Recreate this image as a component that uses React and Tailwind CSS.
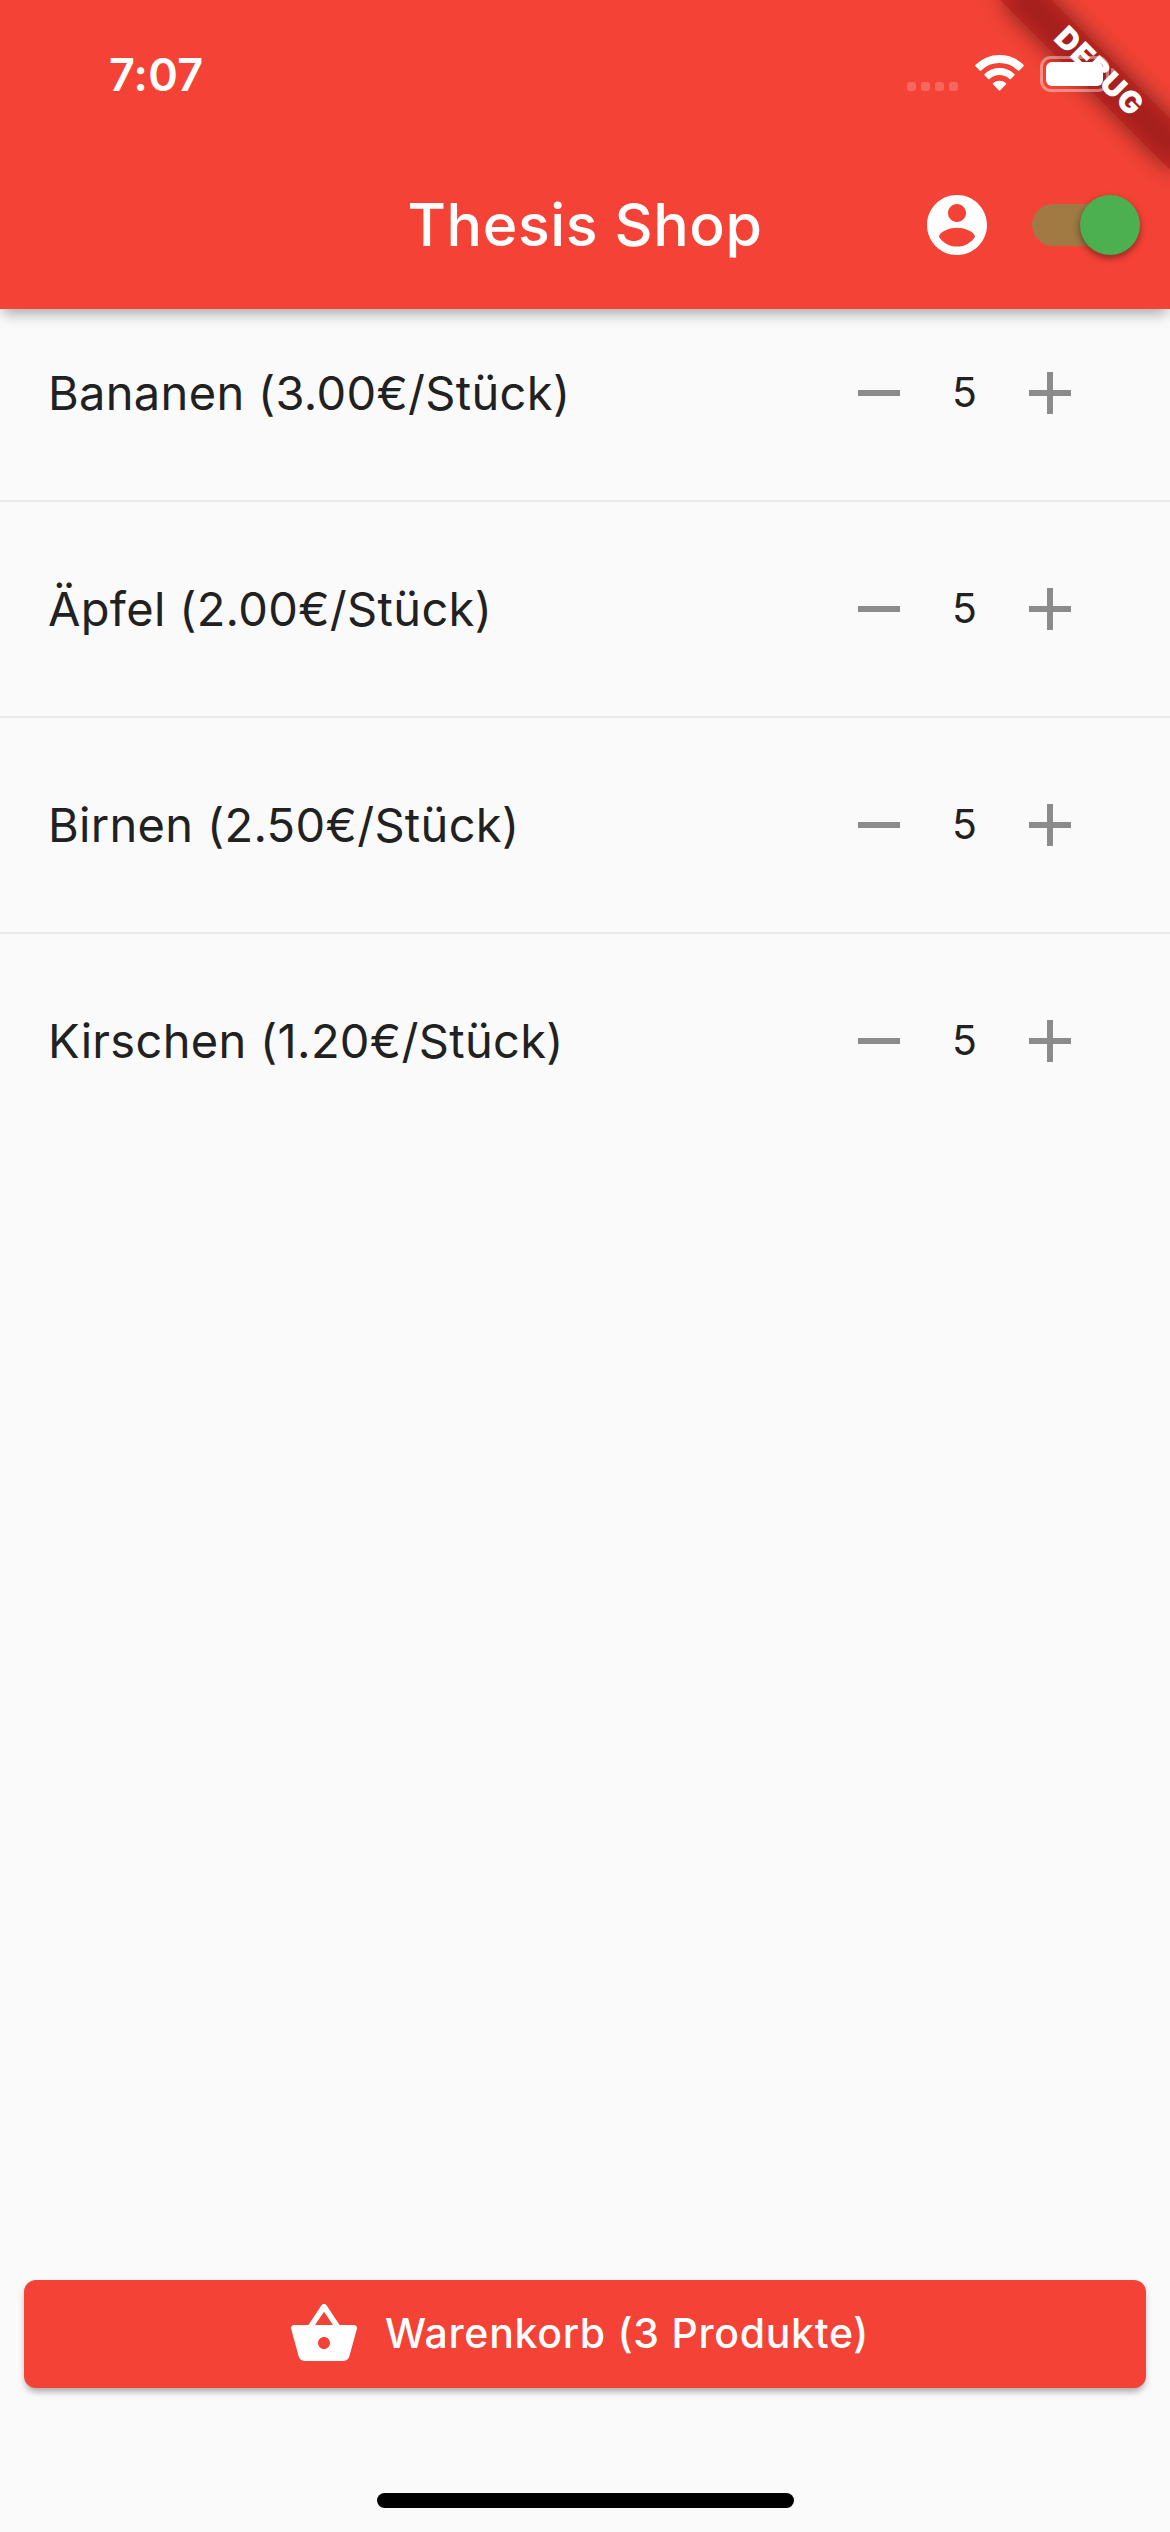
import React from "react";

const products = [
  { name: "Bananen", price: "3.00", count: 5 },
  { name: "Äpfel", price: "2.00", count: 5 },
  { name: "Birnen", price: "2.50", count: 5 },
  { name: "Kirschen", price: "1.20", count: 5 },
];

function WifiIcon() {
  return (
    <svg viewBox="284 165 146 108" className="h-9 w-[49px]" fill="white" stroke="white" strokeWidth="6" strokeLinejoin="round">
      <path d="M287.2 196.4A100 100 0 0 1 426.8 196.4L414.2 209.3A82 82 0 0 0 299.8 209.3Z" />
      <path d="M314.6 224.1A61 61 0 0 1 399.4 224.1L389 234.9A46 46 0 0 0 325 234.9Z" />
      <path d="M340 251.5A26 26 0 0 1 374 251.5L357 269Z" />
    </svg>
  );
}

function Battery() {
  return (
    <div className="flex h-9 items-center gap-[2px]">
      <div className="h-9 w-[69px] rounded-[11px] border-[3px] border-white/40 p-[3px]">
        <div className="h-6 w-[57px] rounded-[6px] bg-white" />
      </div>
      <div className="h-3 w-1 rounded-r-full bg-white/40" />
    </div>
  );
}

function AccountIcon() {
  return (
    <svg viewBox="0 0 24 24" className="size-[72px]" fill="white">
      <path d="M12 2C6.48 2 2 6.48 2 12s4.48 10 10 10 10-4.48 10-10S17.52 2 12 2zm0 3c1.66 0 3 1.34 3 3s-1.34 3-3 3-3-1.34-3-3 1.34-3 3-3zm0 14.2c-2.5 0-4.71-1.28-6-3.22.03-1.99 4-3.08 6-3.08 1.99 0 5.97 1.09 6 3.08-1.29 1.94-3.5 3.22-6 3.22z" />
    </svg>
  );
}

function BasketIcon() {
  return (
    <svg viewBox="0 0 24 24" className="size-[72px] shrink-0" fill="white">
      <path d="M17.21 9l-4.38-6.56c-.19-.28-.51-.42-.83-.42-.32 0-.64.14-.83.43L6.79 9H2c-.55 0-1 .45-1 1 0 .09.01.18.04.27l2.54 9.27c.23.84 1 1.46 1.92 1.46h13c.92 0 1.69-.62 1.93-1.46l2.54-9.27L23 10c0-.55-.45-1-1-1h-4.79zM9 9l3-4.4L15 9H9zm3 8c-1.1 0-2-.9-2-2s.9-2 2-2 2 .9 2 2-.9 2-2 2z" />
    </svg>
  );
}

function ProductRow({ product }) {
  return (
    <li className="flex h-[216px] items-center justify-between border-t-2 border-[#ebebeb] pl-12 pr-[84px] first:h-[215px] first:border-t first:border-transparent">
      <span className="pb-px text-[47px] leading-none tracking-[0.32px]">
        {product.name} ({product.price}€/Stück)
      </span>
      <div className="flex items-center">
        <svg viewBox="0 0 24 24" className="size-[72px]" fill="#8b8b8b">
          <path d="M19 13H5v-2h14v2z" />
        </svg>
        <span className="w-[99px] pb-[2px] text-center text-[41px] leading-none">{product.count}</span>
        <svg viewBox="0 0 24 24" className="size-[72px]" fill="#8b8b8b">
          <path d="M19 13h-6v6h-2v-6H5v-2h6V5h2v6h6v2z" />
        </svg>
      </div>
    </li>
  );
}

export default function App() {
  return (
    <div className="relative flex h-[2532px] w-[1170px] flex-col overflow-hidden bg-[#fafafa] font-['Inter',sans-serif] text-[#212121]">
      <header className="relative z-10 h-[309px] shrink-0 bg-[#f44336] text-white shadow-[0_6px_12px_-3px_rgba(0,0,0,0.2),0_9px_15px_-3px_rgba(0,0,0,0.16)]">
        <div className="relative z-20 flex h-[141px] items-start justify-between pl-[109px] pr-[55px] pt-[55px]">
          <span className="mt-[-3px] text-[45px] font-semibold leading-[45px] tracking-[0.2px]">7:07</span>
          <div className="flex items-start">
            <div className="mr-[17px] mt-[27px] flex gap-[5px]">
              {[0, 1, 2, 3].map((i) => (
                <span key={i} className="size-[9px] rounded-[3px] bg-white/20" />
              ))}
            </div>
            <WifiIcon />
            <div className="ml-4 mt-px">
              <Battery />
            </div>
          </div>
        </div>
        <div className="grid h-[168px] grid-cols-[1fr_auto_1fr] items-center">
          <span />
          <h1 className="pb-px text-[59px] font-medium leading-none tracking-[0.6px]">Thesis Shop</h1>
          <div className="flex items-center justify-end pr-[30px]">
            <AccountIcon />
            <div className="ml-[39px] flex h-[42px] w-[108px] items-center">
              <div className="flex h-[42px] w-[99px] items-center rounded-full bg-[#4caf50]/50">
                <div className="ml-12 size-[60px] shrink-0 rounded-full bg-[#4caf50] shadow-[0_3px_6px_rgba(0,0,0,0.3),0_3px_9px_rgba(0,0,0,0.15)]" />
              </div>
            </div>
          </div>
        </div>
        <div className="absolute right-0 top-0 size-[240px] overflow-hidden">
          <div className="absolute left-[120px] top-[84px] h-9 w-[240px] origin-[120px_-84px] rotate-45">
            <div className="absolute inset-0 bg-black/50 blur-[12px]" />
            <div className="absolute inset-0 flex items-center justify-center bg-[#b71c1c]/63">
              <span className="pb-1 pl-px text-[30.5px] font-black leading-none tracking-[1px]">DEBUG</span>
            </div>
          </div>
        </div>
      </header>

      <ul className="-mt-6">
        {products.map((p) => (
          <ProductRow key={p.name} product={p} />
        ))}
      </ul>

      <footer className="mt-auto flex flex-col items-center px-6 pb-6">
        <button className="flex h-[108px] w-full items-center justify-center gap-[25px] rounded-xl bg-[#f44336] pr-[13px] text-white shadow-[0_6px_6px_-3px_rgba(0,0,0,0.2),0_4px_7px_rgba(0,0,0,0.16)]">
          <BasketIcon />
          <span className="pb-[2px] text-[41px] font-medium leading-none tracking-[0.7px]">Warenkorb (3 Produkte)</span>
        </button>
        <div className="mt-[105px] h-[15px] w-[417px] rounded-full bg-black" />
      </footer>
    </div>
  );
}
